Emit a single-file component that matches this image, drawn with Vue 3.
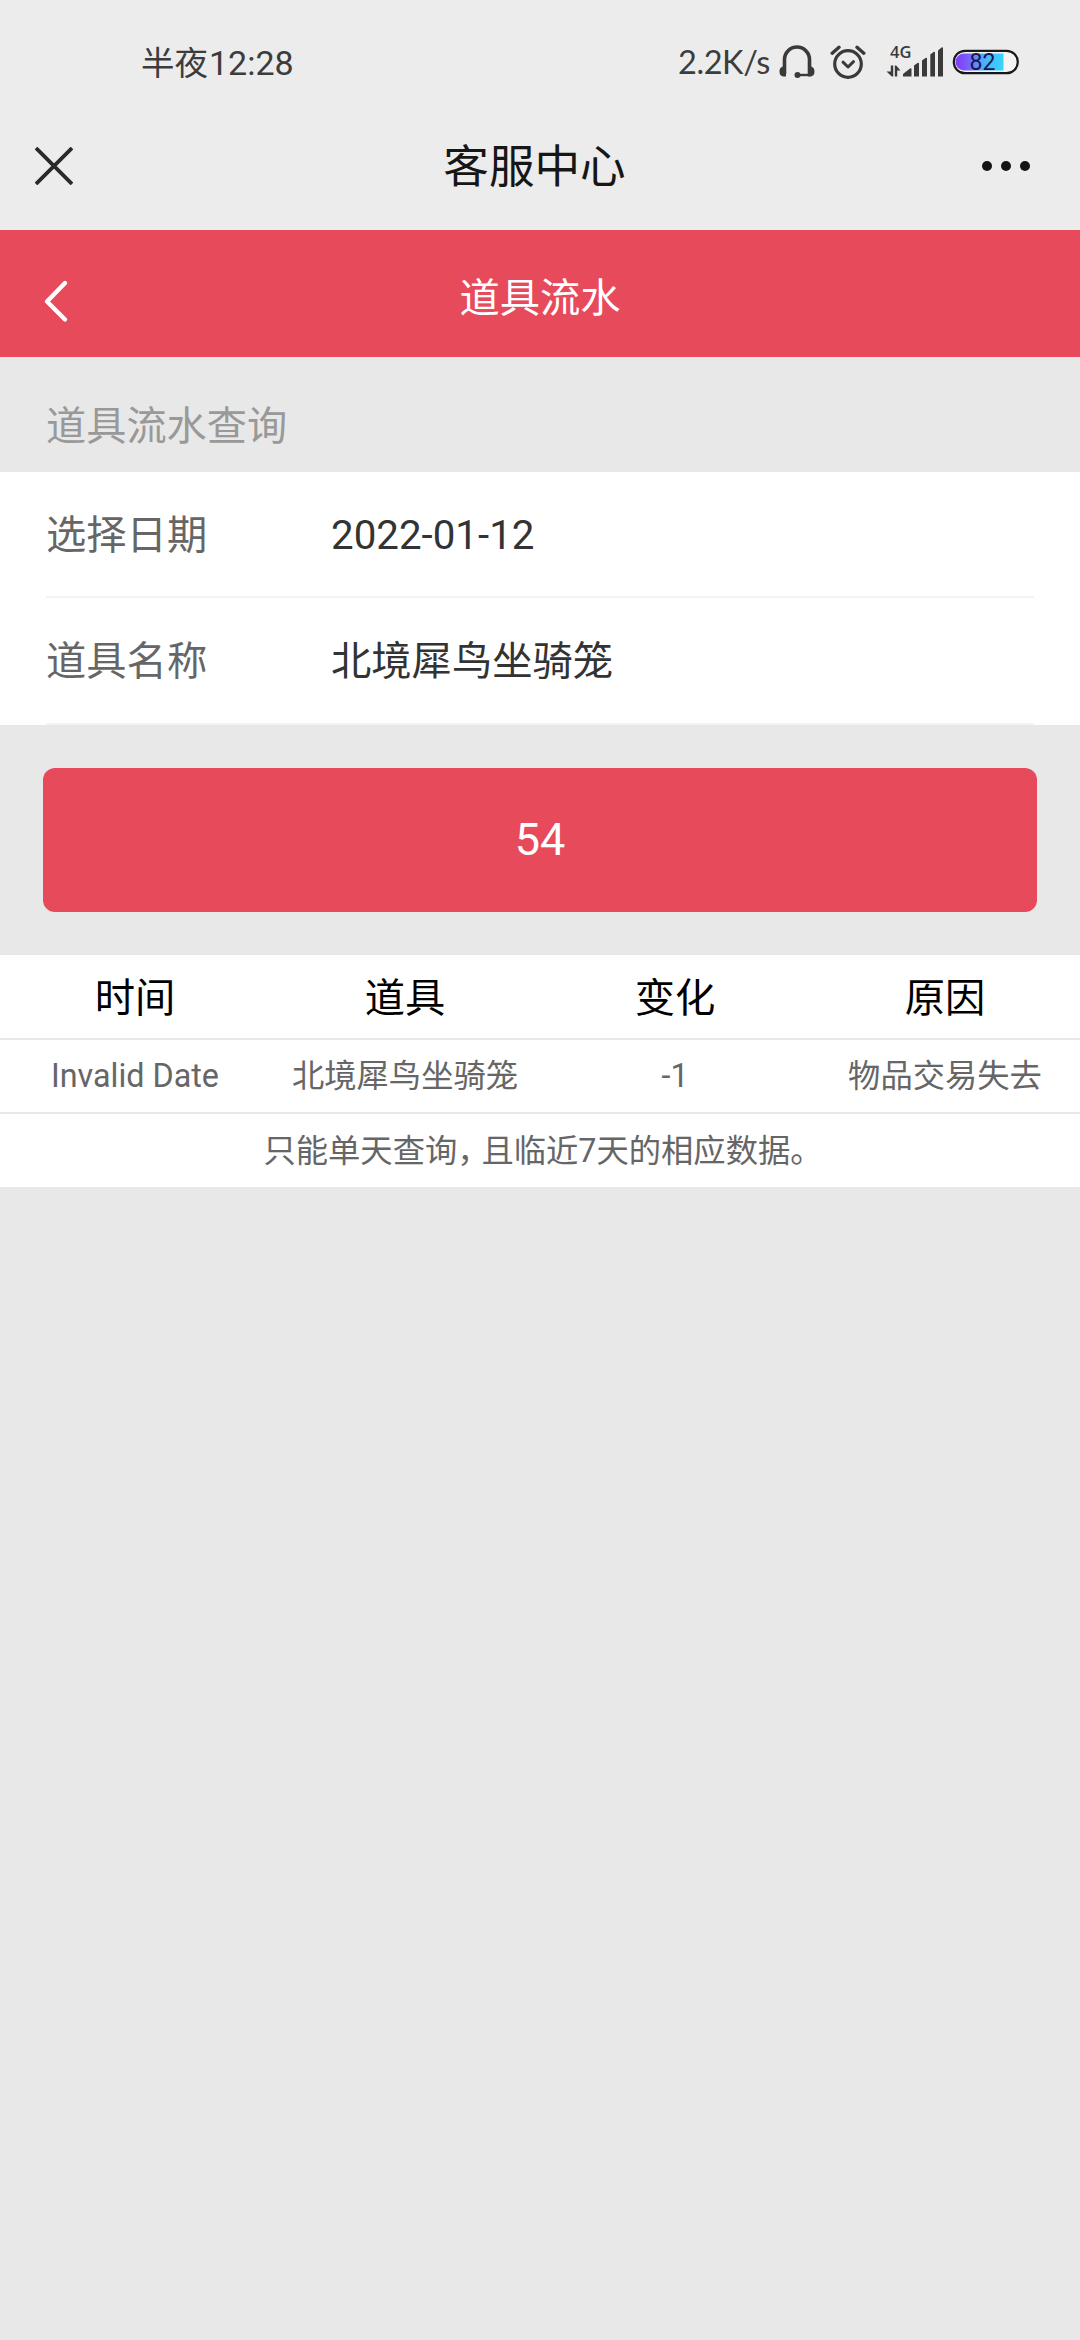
<script setup>
const fields = [
  { label: '选择日期', value: '2022-01-12' },
  { label: '道具名称', value: '北境犀鸟坐骑笼' },
]
const columns = ['时间', '道具', '变化', '原因']
const rows = [['Invalid Date', '北境犀鸟坐骑笼', '-1', '物品交易失去']]
</script>

<template>
  <div class="page">
    <div class="status">
      <div class="clock">半夜<span class="digits">12:28</span></div>
      <div class="indicators">
        <span class="speed">2.2K/s</span>
        <svg class="headset" width="36" height="34" viewBox="0 0 36 34">
          <path d="M5.500 29V14.500a12.500 12.500 0 0 1 25 0V29" fill="none" stroke="#3a3a3a" stroke-width="3.600" />
          <path d="M7 21.500v10H5.500C2 31.500.500 29.500.500 26.500s1.500-5 5-5zM29 21.500v10h1.500c3.500 0 5-2 5-5s-1.500-5-5-5z" fill="#3a3a3a" />
          <path d="M18 30H31" stroke="#3a3a3a" stroke-width="2.400" />
          <circle cx="18.500" cy="30" r="3" fill="#3a3a3a" />
        </svg>
        <svg class="alarm" width="36" height="36" viewBox="0 0 36 36" fill="none" stroke="#3a3a3a" stroke-linecap="round">
          <circle cx="18" cy="20" r="13.300" stroke-width="3.200" />
          <path d="M2.200 9.200L9 3.300M33.800 9.200L27 3.300" stroke-width="3.400" />
          <path d="M13 18.200l5 4.800 5.500-5.300" stroke-width="3" stroke-linejoin="round" />
        </svg>
        <div class="signal">
          <span class="net">4G</span>
          <svg width="58" height="34" viewBox="0 0 58 34" fill="#3a3a3a">
            <path d="M4.800 20.500h2.400V31.500H5.800L.500 26.500h4.300zM8.800 20.500h1.400l4.300 5h-3.300v6H8.800z" />
            <path d="M17 31.500v-2.500l7-5.500q1.500-1 1.500.800v7.200zM28 20.500l3.500-2.500q1.500-.800 1.500.800v12.700h-5zM36 15.500l3.500-2.500q1.500-.800 1.500.800v17.700h-5zM44.300 9.500l3.200-2.500q1.500-.800 1.500.800v23.700h-4.700zM52 5.500l3.500-3q1.500-.800 1.500.800v28.200h-5z" />
          </svg>
        </div>
        <svg class="battery" width="68" height="26" viewBox="0 0 68 26">
          <defs>
            <linearGradient id="charge">
              <stop offset="0" stop-color="#7f3cf5" />
              <stop offset=".25" stop-color="#7a5cff" />
              <stop offset=".6" stop-color="#4eb0fc" />
              <stop offset="1" stop-color="#35d6fb" />
            </linearGradient>
          </defs>
          <rect x="1.800" y="1.800" width="64" height="22.400" rx="11.200" fill="#f4f4f4" stroke="#181818" stroke-width="2.200" />
          <path d="M12 4.500H51.500V21.500H12a8.500 8.500 0 0 1 0-17z" fill="url(#charge)" />
          <text x="30.500" y="21" text-anchor="middle" class="level">82</text>
        </svg>
      </div>
    </div>

    <div class="nav">
      <svg width="38" height="38" viewBox="0 0 38 38" stroke="#2a2a2a" stroke-width="3.800">
        <path d="M1 1L37 37M37 1L1 37" />
      </svg>
      <div class="nav-title">客服中心</div>
      <svg width="50" height="12" viewBox="0 0 50 12" fill="#141414">
        <circle cx="6" cy="6" r="5" /><circle cx="25" cy="6" r="5" /><circle cx="44" cy="6" r="5" />
      </svg>
    </div>

    <header class="bar">
      <svg width="26" height="44" viewBox="0 0 26 44" fill="none" stroke="#fff" stroke-width="4.400" stroke-linecap="round" stroke-linejoin="round">
        <path d="M22 4L4 22.500 22 40.500" />
      </svg>
      <h1>道具流水</h1>
    </header>

    <h2 class="section">道具流水查询</h2>
    <div class="form">
      <div v-for="f in fields" :key="f.label" class="field">
        <span class="label">{{ f.label }}</span>
        <span class="value">{{ f.value }}</span>
      </div>
    </div>

    <button class="submit">54</button>

    <div class="table">
      <div class="tr head">
        <span v-for="c in columns" :key="c">{{ c }}</span>
      </div>
      <div v-for="(r, i) in rows" :key="i" class="tr body">
        <span v-for="(c, j) in r" :key="j">{{ c }}</span>
      </div>
      <div class="note">只能单天查询<span class="comma">，</span>且临近7天的相应数据。</div>
    </div>
  </div>
</template>

<style>
body {
  background: #e8e8e8;
}
</style>

<style scoped>
.page {
  width: 1080px;
  height: 2340px;
  overflow: hidden;
  background: #e8e8e8;
  font-family: Roboto, "Noto Sans CJK SC", sans-serif;
  font-size: 40.3px;
}
.status {
  box-sizing: border-box;
  height: 124px;
  padding: 0 60px 0 141px;
  display: flex;
  align-items: center;
  justify-content: space-between;
  background: #ececec;
  color: #3c3c3c;
  font-size: 33.5px;
}
.clock {
  line-height: 40px;
  padding-top: 2px;
}
.digits {
  margin-left: 1px;
  font-size: 34px;
}
.indicators {
  display: flex;
  align-items: center;
}
.speed {
  font-family: Lato, sans-serif;
  font-size: 32.5px;
  line-height: 40px;
  letter-spacing: -0.4px;
  margin-right: 9px;
}
.alarm {
  margin-left: 15px;
}
.signal {
  position: relative;
  display: flex;
  margin-left: 20px;
}
.net {
  position: absolute;
  left: 4px;
  top: -4px;
  color: #3a3a3a;
  font: 600 16.5px/21px "Open Sans", sans-serif;
}
.battery {
  margin-left: 8px;
}
.level {
  font: 23px Roboto, sans-serif;
  fill: #17174d;
}
.nav {
  box-sizing: border-box;
  height: 106px;
  padding: 0 49px 22px 35px;
  display: flex;
  align-items: center;
  background: #ececec;
}
.nav-title {
  flex: 1;
  padding: 4px 0 0 15px;
  text-align: center;
  color: #161616;
  font-size: 45.6px;
  line-height: 60px;
}
.bar {
  box-sizing: border-box;
  height: 127px;
  padding: 0 43px;
  display: flex;
  align-items: center;
  background: #e74b5b;
  color: #fff;
}
h1,
h2 {
  margin: 0;
  font-size: 40.3px;
  font-weight: 400;
}
.bar svg {
  margin-top: 14px;
}
.bar h1 {
  flex: 1;
  margin: 11px 26px 0 0;
  line-height: 60px;
  text-align: center;
}
.section {
  height: 115px;
  padding: 0 46px;
  line-height: 139px;
  font-size: 40.2px;
  color: #999;
}
.form {
  padding: 0 46px;
  background: #fff;
}
.field {
  box-sizing: border-box;
  height: 126px;
  display: flex;
  align-items: baseline;
  line-height: 127px;
  border-bottom: 2px solid #f3f3f3;
}
.field + .field {
  height: 127px;
}
.label {
  width: 285px;
  color: #666;
}
.value {
  color: #333;
}
.submit {
  display: block;
  width: 994px;
  height: 144px;
  margin: 43px auto;
  padding: 0;
  border: 0;
  border-radius: 12px;
  background: #e74b5b;
  color: #fff;
  font: 45px/142px Roboto, sans-serif;
}
.table {
  background: #fff;
}
.tr {
  display: grid;
  grid-template-columns: repeat(4, 1fr);
  box-sizing: border-box;
  border-bottom: 2px solid #e8e8e8;
  text-align: center;
}
.head {
  height: 85px;
  line-height: 87px;
  color: #000;
}
.body,
.note {
  color: #666;
  font-size: 32.3px;
}
.body {
  height: 74px;
  line-height: 72px;
}
.note {
  height: 73px;
  padding-left: 6px;
  line-height: 75px;
  text-align: center;
}
.comma {
  margin-right: 8px;
  font-feature-settings: "halt";
}
</style>
